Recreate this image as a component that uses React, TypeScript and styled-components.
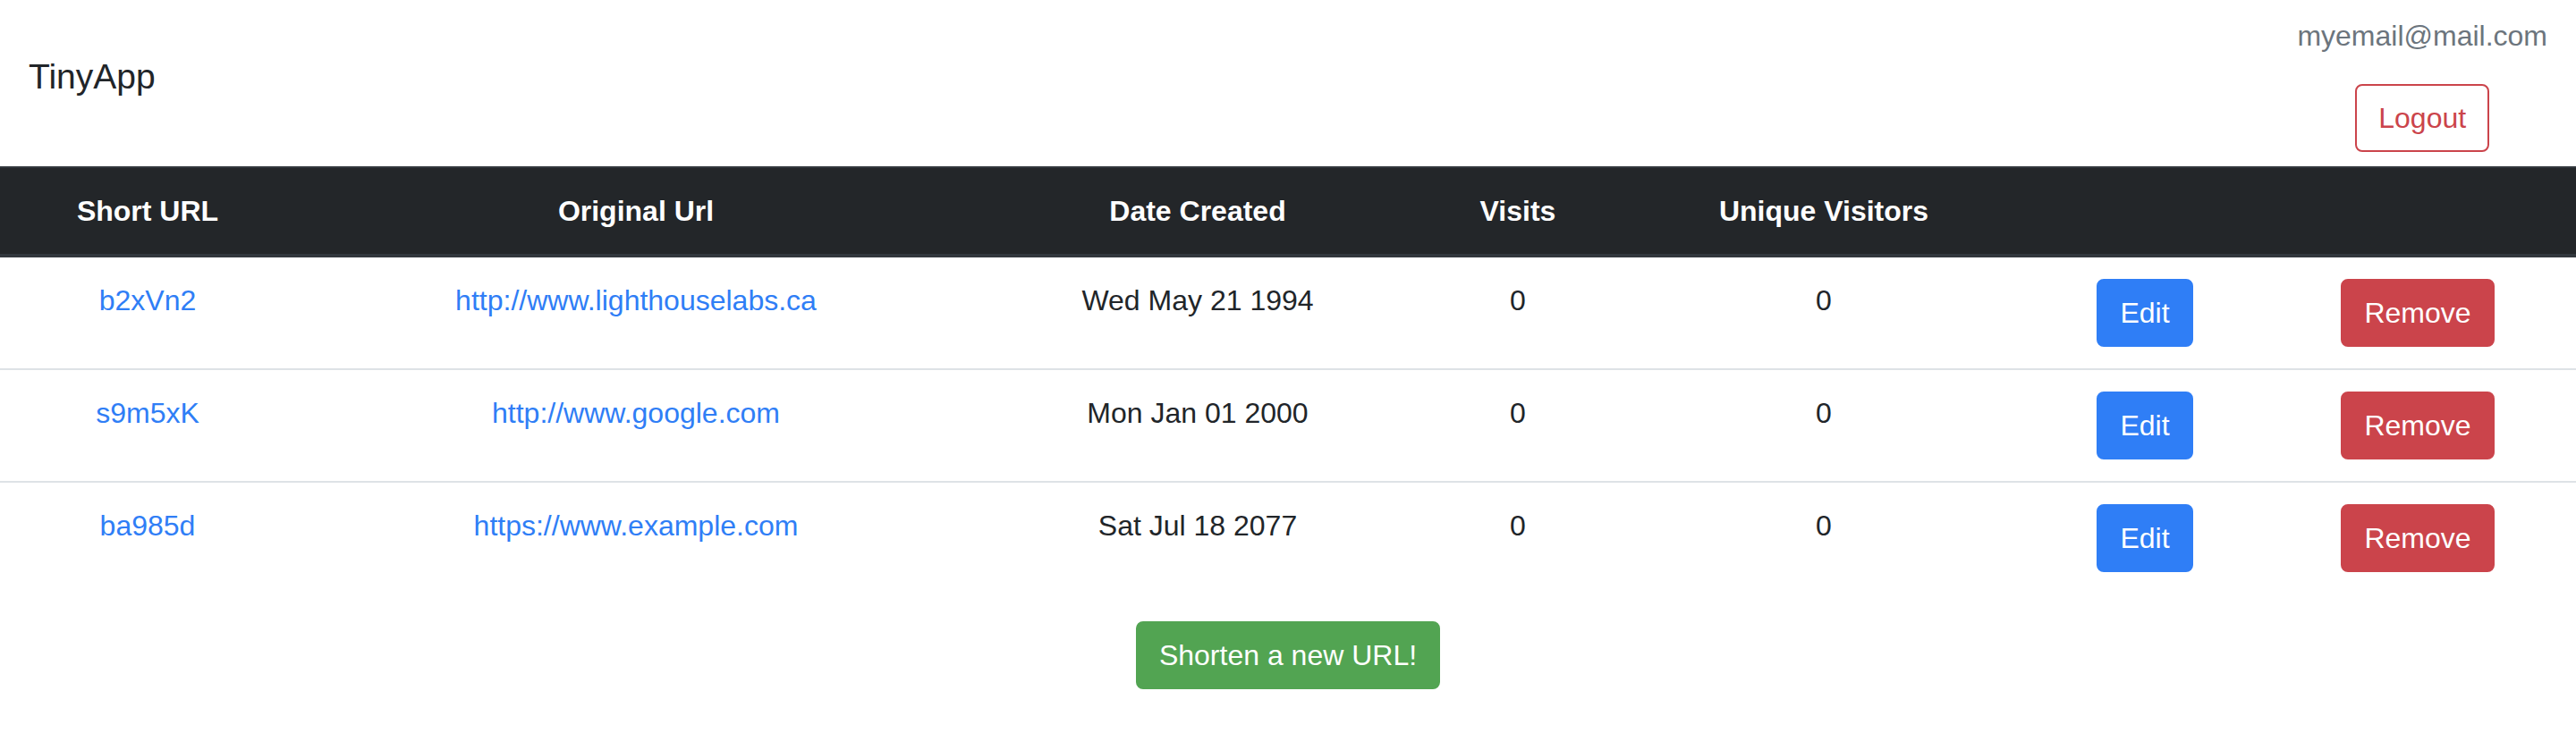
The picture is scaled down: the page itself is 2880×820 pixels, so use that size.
import React from "react";
import styled, { createGlobalStyle } from "styled-components";

const GlobalStyle = createGlobalStyle`
  html, body { margin: 0; padding: 0; background: #ffffff; overflow: hidden; }
  body {
    font-family: "Liberation Sans", Arial, sans-serif;
    font-size: 32px;
    line-height: 48px;
    color: #212529;
  }
  * { box-sizing: border-box; }
`;

const Page = styled.div`
  width: 100%;
  display: flex;
  flex-direction: column;
`;

const NavBar = styled.header`
  display: flex;
  justify-content: space-between;
  align-items: flex-start;
  height: 186px;
  padding: 16px 32px 0 32px;
`;

const Brand = styled.a`
  margin-top: 40px;
  font-size: 39px;
  line-height: 60px;
  color: #212529;
  text-decoration: none;
`;

const UserBox = styled.div`
  display: flex;
  flex-direction: column;
  align-items: center;
  gap: 30px;
`;

const Email = styled.span`
  color: #6c757d;
  font-size: 32px;
  line-height: 48px;
`;

const Button = styled.button<{ $variant: "primary" | "danger" | "success" | "outlineDanger" }>`
  font-family: "Liberation Sans", Arial, sans-serif;
  font-size: 32px;
  line-height: 48px;
  padding: 12px 24px;
  border-radius: 8px;
  border: 2px solid
    ${(p) =>
      p.$variant === "primary"
        ? "#2f7ef6"
        : p.$variant === "success"
        ? "#52a452"
        : "#cb444b"};
  background: ${(p) =>
    p.$variant === "primary"
      ? "#2f7ef6"
      : p.$variant === "success"
      ? "#52a452"
      : p.$variant === "danger"
      ? "#cb444b"
      : "transparent"};
  color: ${(p) => (p.$variant === "outlineDanger" ? "#cb444b" : "#ffffff")};
  cursor: pointer;
`;

const Table = styled.table`
  width: 100%;
  table-layout: fixed;
  border-collapse: collapse;
  text-align: center;
  margin-bottom: 31px;
`;

const HeadCell = styled.th`
  background: #232629;
  color: #ffffff;
  font-weight: 700;
  padding: 24px;
  line-height: 48px;
  border-top: 2px solid #32373d;
  border-bottom: 4px solid #32373d;
  vertical-align: bottom;
`;

const Row = styled.tr<{ $first?: boolean }>`
  & > td {
    border-top: ${(p) => (p.$first ? "0" : "2px solid #dee2e6")};
  }
`;

const Cell = styled.td`
  padding: 24px;
  vertical-align: top;
  line-height: 48px;
`;

const Link = styled.a`
  color: #2f7ef6;
  text-decoration: none;
`;

const Footer = styled.div`
  display: flex;
  justify-content: center;
`;

const widths = [330, 762, 494, 222, 462, 256, 354];

const urls = [
  { id: "b2xVn2", long: "http://www.lighthouselabs.ca", date: "Wed May 21 1994" },
  { id: "s9m5xK", long: "http://www.google.com", date: "Mon Jan 01 2000" },
  { id: "ba985d", long: "https://www.example.com", date: "Sat Jul 18 2077" },
];

export default function App() {
  return (
    <Page>
      <GlobalStyle />
      <NavBar>
        <Brand href="#">TinyApp</Brand>
        <UserBox>
          <Email>myemail@mail.com</Email>
          <Button $variant="outlineDanger">Logout</Button>
        </UserBox>
      </NavBar>
      <Table>
        <colgroup>
          {widths.map((w, i) => (
            <col key={i} style={{ width: w }} />
          ))}
        </colgroup>
        <thead>
          <tr>
            <HeadCell>Short URL</HeadCell>
            <HeadCell>Original Url</HeadCell>
            <HeadCell>Date Created</HeadCell>
            <HeadCell>Visits</HeadCell>
            <HeadCell>Unique Visitors</HeadCell>
            <HeadCell />
            <HeadCell />
          </tr>
        </thead>
        <tbody>
          {urls.map((u, i) => (
            <Row key={u.id} $first={i === 0}>
              <Cell>
                <Link href="#">{u.id}</Link>
              </Cell>
              <Cell>
                <Link href="#">{u.long}</Link>
              </Cell>
              <Cell>{u.date}</Cell>
              <Cell>0</Cell>
              <Cell>0</Cell>
              <Cell>
                <Button $variant="primary">Edit</Button>
              </Cell>
              <Cell>
                <Button $variant="danger">Remove</Button>
              </Cell>
            </Row>
          ))}
        </tbody>
      </Table>
      <Footer>
        <Button $variant="success">Shorten a new URL!</Button>
      </Footer>
    </Page>
  );
}
